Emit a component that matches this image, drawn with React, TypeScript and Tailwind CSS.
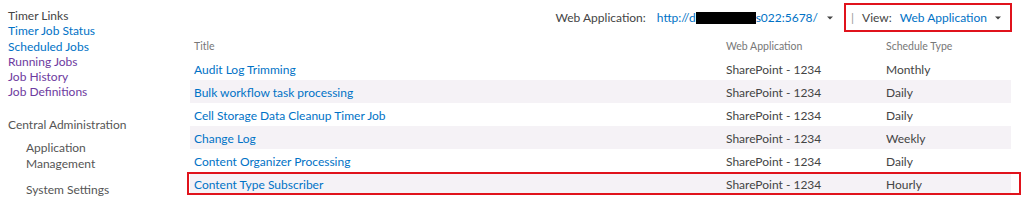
import React from "react";

const Caret = ({ ml }: { ml: string }) => (
  <svg width="6" height="4" viewBox="0 0 6 4" className={"inline-block shrink-0 " + ml}>
    <path d="M0 0.5 L6 0.5 L3 3.5 Z" fill="#444" />
  </svg>
);

const rows = [
  { t: "Audit Log Trimming", w: "SharePoint - 1234", s: "Monthly" },
  { t: "Bulk workflow task processing", w: "SharePoint - 1234", s: "Daily" },
  { t: "Cell Storage Data Cleanup Timer Job", w: "SharePoint - 1234", s: "Daily" },
  { t: "Change Log", w: "SharePoint - 1234", s: "Weekly" },
  { t: "Content Organizer Processing", w: "SharePoint - 1234", s: "Daily" },
  { t: "Content Type Subscriber", w: "SharePoint - 1234", s: "Hourly" },
];

export default function App() {
  return (
    <div
      className="w-[1024px] h-[200px] bg-white flex overflow-hidden text-[12px] text-[#444] whitespace-nowrap"
      style={{ fontFamily: 'Lato, "Open Sans", sans-serif' }}
    >
      <div className="w-[190px] shrink-0 pl-2 pt-[8px] leading-[15.3px]">
        <div className="text-[#444]">Timer Links</div>
        <div className="text-[#0072c6]">Timer Job Status</div>
        <div className="text-[#0072c6]">Scheduled Jobs</div>
        <div className="text-[#6d3aa0]">Running Jobs</div>
        <div className="text-[#6d3aa0]">Job History</div>
        <div className="text-[#6d3aa0]">Job Definitions</div>
        <div className="mt-[17px] text-[#555]">Central Administration</div>
        <div className="pl-[18px] mt-[8px] text-[#555] leading-[16px]">
          <div>Application</div>
          <div>Management</div>
          <div className="mt-[10px]">System Settings</div>
        </div>
      </div>
      <div className="flex-1 flex flex-col">
        <div className="h-[36px] flex items-start justify-end pr-[12px]">
          <div className="flex items-center h-[29px] mt-[3px] pt-[1px]">
            <span className="text-[#444]">Web Application:</span>
            <span className="ml-[11px] text-[#0072c6] flex items-center">
              http://d
              <span className="inline-block w-[60px] h-[12px] bg-black" />
              s022:5678/
            </span>
            <Caret ml="ml-[9px]" />
          </div>
          <div className="ml-[11px] mt-[3px] h-[29px] w-[168px] border-2 border-[#e0131c] flex items-center pl-[5px] pt-[1px]">
            <span className="text-[#999]">|</span>
            <span className="ml-[8px] text-[#444]">View:</span>
            <span className="ml-[8px] text-[#0072c6]">Web Application</span>
            <Caret ml="ml-[8px]" />
          </div>
        </div>
        <div className="w-[821px]">
          <div className="h-[21px] flex items-center text-[10.5px] text-[#777]">
            <div className="w-[532px] pl-[4px]">Title</div>
            <div className="w-[160px] pl-[4px]">Web Application</div>
            <div className="flex-1 pl-[4px]">Schedule Type</div>
          </div>
          {rows.map((r, i) => (
            <div
              key={r.t}
              className={
                "relative h-[23px] flex items-center pt-[2px] " +
                (i % 2 === 1 ? "bg-[#f5f2f6]" : "bg-white")
              }
            >
              <div className="w-[532px] pl-[4px] text-[#0072c6]">{r.t}</div>
              <div className="w-[160px] pl-[4px] text-[#444]">{r.w}</div>
              <div className="flex-1 pl-[4px] text-[#444]">{r.s}</div>
              {i === rows.length - 1 && (
                <div className="absolute -left-[3px] -right-[10px] top-0 bottom-0 border-2 border-[#e0131c]" />
              )}
            </div>
          ))}
        </div>
      </div>
    </div>
  );
}
